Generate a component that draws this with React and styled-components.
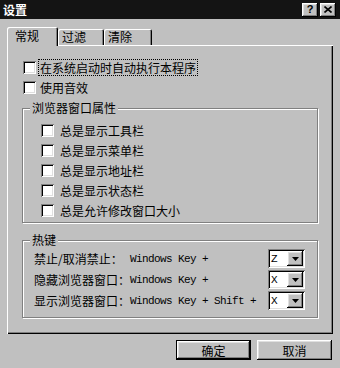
import React from 'react';
import styled, { createGlobalStyle } from 'styled-components';

const GlobalStyle = createGlobalStyle`
  html, body {
    margin: 0;
    padding: 0;
    background: #c0c0c0;
  }
  body {
    font-family: "Noto Sans CJK SC", "Liberation Sans", sans-serif;
    font-size: 12px;
    color: #000;
  }
  * { box-sizing: border-box; }
`;

const raised = `
  box-shadow: inset -1px -1px #000, inset 1px 1px #fff,
    inset -2px -2px #808080, inset 2px 2px #dfdfdf;
`;

const sunken = `
  box-shadow: inset 1px 1px #808080, inset -1px -1px #fff,
    inset 2px 2px #000, inset -2px -2px #dfdfdf;
`;

const Window = styled.div`
  width: 340px;
  height: 368px;
  display: flex;
  flex-direction: column;
  background: #c0c0c0;
`;

const TitleBar = styled.div`
  height: 19px;
  background: #141414;
  display: flex;
  align-items: center;
  justify-content: space-between;
  padding: 0 4px 0 3px;
`;

const TitleText = styled.span`
  color: #fff;
  font-weight: bold;
  font-size: 12px;
  line-height: 1;
`;

const TitleButtons = styled.div`
  display: flex;
  gap: 2px;
`;

const TitleButton = styled.div`
  width: 16px;
  height: 14px;
  background: #c0c0c0;
  ${raised}
  display: flex;
  align-items: center;
  justify-content: center;
  font-family: "Liberation Sans", sans-serif;
  font-weight: bold;
  font-size: 11px;
  line-height: 1;
`;

const Body = styled.div`
  padding: 8px 7px 0;
`;

const TabRow = styled.div`
  height: 18px;
  display: flex;
  align-items: flex-end;
`;

// tab captions sit near the left edge, the active one a little further in
const Tab = styled.div`
  width: ${p => p.$w}px;
  height: ${p => (p.$active ? 19 : 16)}px;
  margin-bottom: ${p => (p.$active ? -1 : 0)}px;
  padding-left: ${p => (p.$active ? 8 : 4)}px;
  padding-bottom: ${p => (p.$active ? 2 : 0)}px;
  position: relative;
  z-index: ${p => (p.$active ? 1 : 0)};
  background: #c0c0c0;
  box-shadow: inset 1px 1px #fff, inset -1px 0 #000, inset -2px 0 #808080;
  border-radius: 2px 2px 0 0;
  display: flex;
  align-items: center;
  line-height: 1;
`;

const Panel = styled.div`
  height: 289px;
  box-shadow: inset 1px 1px #fff, inset -1px -1px #000, inset -2px -2px #808080;
  padding: 12px 15px 0;
  display: flex;
  flex-direction: column;
`;

const CheckRow = styled.div`
  height: 20px;
  display: flex;
  align-items: center;
  gap: ${p => p.$gap}px;
  margin-left: ${p => p.$indent || 0}px;
`;

const Box = styled.span`
  width: 13px;
  height: 13px;
  flex-shrink: 0;
  background: #fff;
  ${sunken}
`;

const CheckLabel = styled.span`
  border: 1px dotted ${p => (p.$focus ? '#000' : 'transparent')};
  padding: 0 1px;
  line-height: 15px;
  white-space: nowrap;
`;

const GroupBox = styled.div`
  position: relative;
  margin-top: ${p => p.$mt}px;
  border: 1px solid #808080;
  box-shadow: inset 1px 1px #fff, 1px 1px #fff;
  padding: ${p => p.$pad};
`;

const Legend = styled.span`
  position: absolute;
  top: -8px;
  left: 7px;
  padding: 0 2px;
  background: #c0c0c0;
  line-height: 14px;
`;

const HotkeyGrid = styled.div`
  display: grid;
  grid-template-columns: 96px 1fr 37px;
  grid-auto-rows: 21px;
  align-items: center;
`;

const KeyName = styled.span`
  white-space: nowrap;
`;

const Mono = styled.span`
  font-family: "Liberation Mono", monospace;
  font-size: 11px;
  letter-spacing: -0.6px;
  white-space: pre;
`;

const Combo = styled.div`
  width: 37px;
  height: 19px;
  background: #fff;
  ${sunken}
  padding: 2px;
  display: flex;
  align-items: center;
`;

const ComboText = styled(Mono)`
  flex: 1;
  padding-left: 1px;
`;

const ComboArrow = styled.span`
  width: 16px;
  height: 15px;
  background: #c0c0c0;
  ${raised}
  display: flex;
  align-items: center;
  justify-content: center;
`;

const Footer = styled.div`
  display: flex;
  justify-content: flex-end;
  gap: 6px;
  padding: 6px 8px 0;
`;

const Button = styled.button`
  width: 75px;
  height: 20px;
  padding: 0;
  background: #c0c0c0;
  font-family: inherit;
  font-size: 12px;
  color: #000;
  border: ${p => (p.$default ? '1px solid #000' : 'none')};
  ${raised}
`;

const Arrow = () => (
  <svg width="7" height="4" viewBox="0 0 7 4">
    <path d="M0 0h7L3.5 4z" fill="#000" />
  </svg>
);

const CloseGlyph = () => (
  <svg width="8" height="7" viewBox="0 0 8 7">
    <path d="M0.5 0.5l7 6M7.5 0.5l-7 6" stroke="#000" strokeWidth="1.6" />
  </svg>
);

const browserOpts = ['总是显示工具栏', '总是显示菜单栏', '总是显示地址栏', '总是显示状态栏', '总是允许修改窗口大小'];

const hotkeys = [
  { label: '禁止/取消禁止：', combo: 'Windows Key +', key: 'Z' },
  { label: '隐藏浏览器窗口：', combo: 'Windows Key +', key: 'X' },
  { label: '显示浏览器窗口：', combo: 'Windows Key + Shift +', key: 'X' },
];

export default function App() {
  return (
    <Window>
      <GlobalStyle />
      <TitleBar>
        <TitleText>设置</TitleText>
        <TitleButtons>
          <TitleButton>?</TitleButton>
          <TitleButton><CloseGlyph /></TitleButton>
        </TitleButtons>
      </TitleBar>
      <Body>
        <TabRow>
          <Tab $active $w={51}>常规</Tab>
          <Tab $w={46}>过滤</Tab>
          <Tab $w={48}>清除</Tab>
        </TabRow>
        <Panel>
          <CheckRow $gap={2} $indent={1}>
            <Box />
            <CheckLabel $focus>在系统启动时自动执行本程序</CheckLabel>
          </CheckRow>
          <CheckRow $gap={2} $indent={1}>
            <Box />
            <CheckLabel>使用音效</CheckLabel>
          </CheckRow>

          <GroupBox $mt={11} $pad="11px 0 2px 18px">
            <Legend>浏览器窗口属性</Legend>
            {browserOpts.map(t => (
              <CheckRow key={t} $gap={6}>
                <Box />
                <span>{t}</span>
              </CheckRow>
            ))}
          </GroupBox>

          <GroupBox $mt={17} $pad="7px 12px 6px 11px">
            <Legend>热键</Legend>
            <HotkeyGrid>
              {hotkeys.map(h => (
                <React.Fragment key={h.label}>
                  <KeyName>{h.label}</KeyName>
                  <Mono>{h.combo}</Mono>
                  <Combo>
                    <ComboText>{h.key}</ComboText>
                    <ComboArrow><Arrow /></ComboArrow>
                  </Combo>
                </React.Fragment>
              ))}
            </HotkeyGrid>
          </GroupBox>
        </Panel>
      </Body>
      <Footer>
        <Button $default>确定</Button>
        <Button>取消</Button>
      </Footer>
    </Window>
  );
}
